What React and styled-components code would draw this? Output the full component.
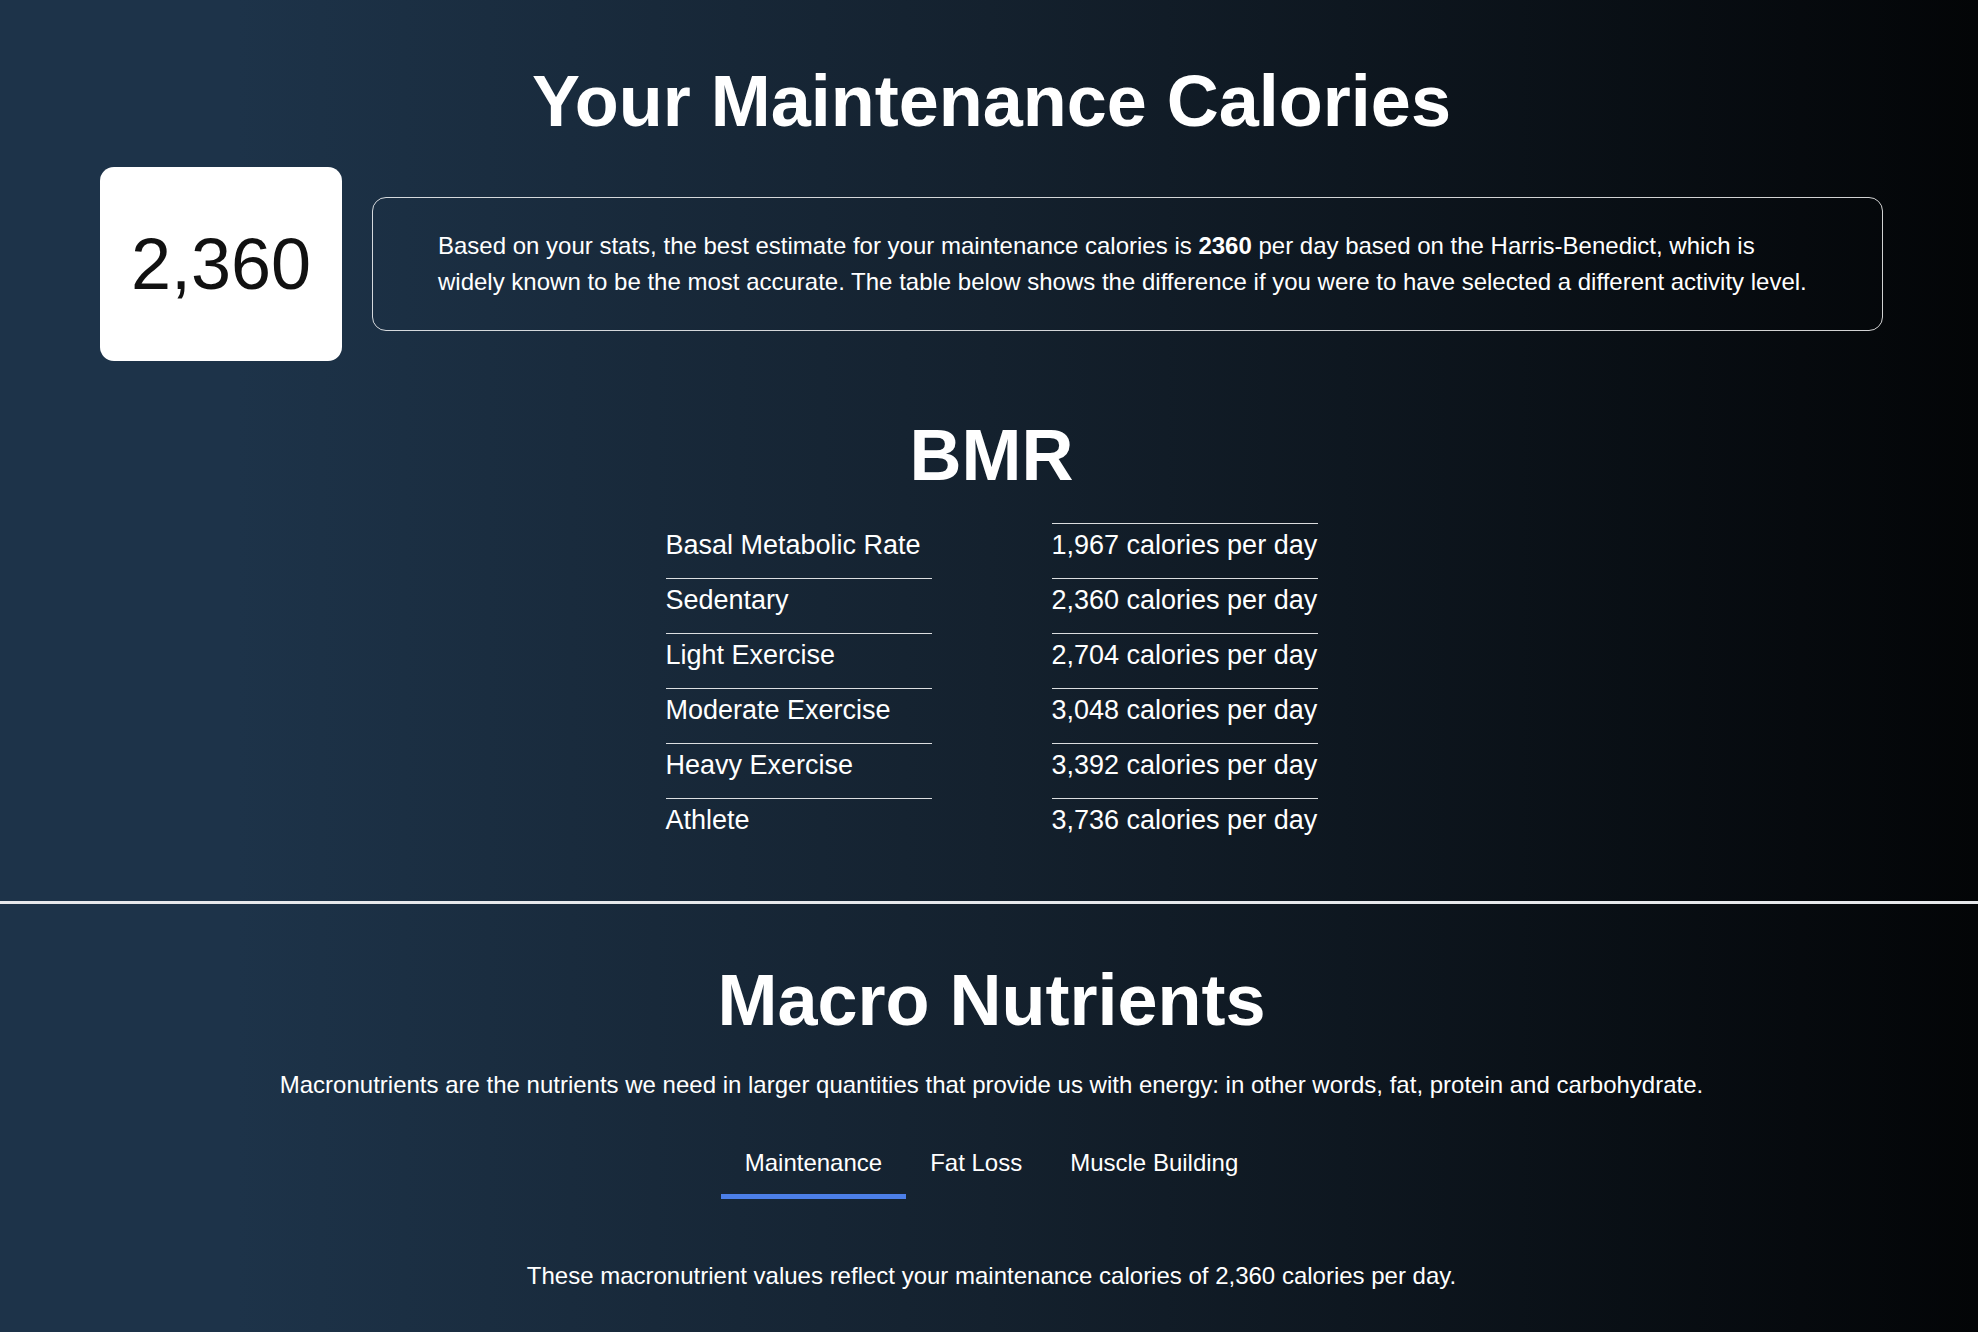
import React, { useState } from "react";
import styled, { createGlobalStyle } from "styled-components";

const GlobalStyle = createGlobalStyle`
  html, body {
    margin: 0;
    padding: 0;
    background: #05080b;
  }
  body {
    font-family: "Liberation Sans", Arial, Helvetica, sans-serif;
    -webkit-font-smoothing: antialiased;
  }
  * { box-sizing: border-box; }
`;

const Page = styled.div`
  min-height: 100vh;
  color: #ffffff;
  background: linear-gradient(to right, #1d3349 12%, #14212e 50%, #030507 100%);
`;

const Section = styled.section`
  padding: ${(p) => p.$pad};
`;

const Heading = styled.h1`
  margin: ${(p) => p.$margin || "0"};
  font-size: 72px;
  line-height: 84px;
  font-weight: 700;
  text-align: center;
  color: #ffffff;
`;

const SummaryRow = styled.div`
  display: flex;
  align-items: center;
  gap: 30px;
  margin-top: 24px;
`;

const CalorieCard = styled.div`
  flex: 0 0 242px;
  height: 194px;
  display: flex;
  align-items: center;
  justify-content: center;
  background: #ffffff;
  border-radius: 14px;
  color: #111111;
  font-size: 72px;
  line-height: 1;
`;

const Explainer = styled.p`
  flex: 1;
  margin: 0;
  padding: 30px 65px;
  border: 1px solid rgba(255, 255, 255, 0.82);
  border-radius: 14px;
  font-size: 24px;
  line-height: 36px;

  b { font-weight: 700; }
`;

const BmrTable = styled.div`
  display: grid;
  grid-template-columns: 266px 266px;
  column-gap: 120px;
  justify-content: center;
  margin-top: 26px;
`;

const Cell = styled.div`
  border-top: 1px solid ${(p) => (p.$lined ? "rgba(255,255,255,0.85)" : "transparent")};
  padding: 6px 0 17px;
  font-size: 27px;
  line-height: 31px;
  white-space: nowrap;
`;

const Divider = styled.hr`
  margin: 0;
  border: none;
  height: 3px;
  background: #e6e8eb;
`;

const Lead = styled.p`
  margin: ${(p) => p.$margin};
  font-size: 24px;
  line-height: 36px;
  text-align: center;
`;

const TabBar = styled.div`
  display: flex;
  justify-content: center;
  margin-top: 30px;
`;

const Tab = styled.button`
  background: none;
  border: none;
  border-bottom: 5px solid ${(p) => (p.$active ? "#4c7fe8" : "transparent")};
  padding: 16px 24px 17px;
  font-family: inherit;
  font-size: 24px;
  line-height: 28px;
  color: #ffffff;
  cursor: pointer;
`;

const rows = [
  ["Basal Metabolic Rate", "1,967 calories per day"],
  ["Sedentary", "2,360 calories per day"],
  ["Light Exercise", "2,704 calories per day"],
  ["Moderate Exercise", "3,048 calories per day"],
  ["Heavy Exercise", "3,392 calories per day"],
  ["Athlete", "3,736 calories per day"],
];

const tabs = ["Maintenance", "Fat Loss", "Muscle Building"];

export default function App() {
  const [active, setActive] = useState(0);
  return (
    <>
      <GlobalStyle />
      <Page>
        <Section $pad="59px 95px 48px 100px">
          <Heading>Your Maintenance Calories</Heading>
          <SummaryRow>
            <CalorieCard>2,360</CalorieCard>
            <Explainer>
              Based on your stats, the best estimate for your maintenance calories is <b>2360</b> per
              day based on the Harris-Benedict, which is widely known to be the most accurate. The
              table below shows the difference if you were to have selected a different activity
              level.
            </Explainer>
          </SummaryRow>
          <Heading as="h2" $margin="52px 0 0">
            BMR
          </Heading>
          <BmrTable>
            {rows.map(([label, value], i) => (
              <React.Fragment key={label}>
                <Cell $lined={i > 0}>{label}</Cell>
                <Cell $lined>{value}</Cell>
              </React.Fragment>
            ))}
          </BmrTable>
        </Section>
        <Divider />
        <Section $pad="54px 95px 40px 100px">
          <Heading as="h2">Macro Nutrients</Heading>
          <Lead $margin="25px 0 0">
            Macronutrients are the nutrients we need in larger quantities that provide us with
            energy: in other words, fat, protein and carbohydrate.
          </Lead>
          <TabBar>
            {tabs.map((t, i) => (
              <Tab key={t} $active={i === active} onClick={() => setActive(i)}>
                {t}
              </Tab>
            ))}
          </TabBar>
          <Lead $margin="59px 0 0">
            These macronutrient values reflect your maintenance calories of 2,360 calories per day.
          </Lead>
        </Section>
      </Page>
    </>
  );
}
